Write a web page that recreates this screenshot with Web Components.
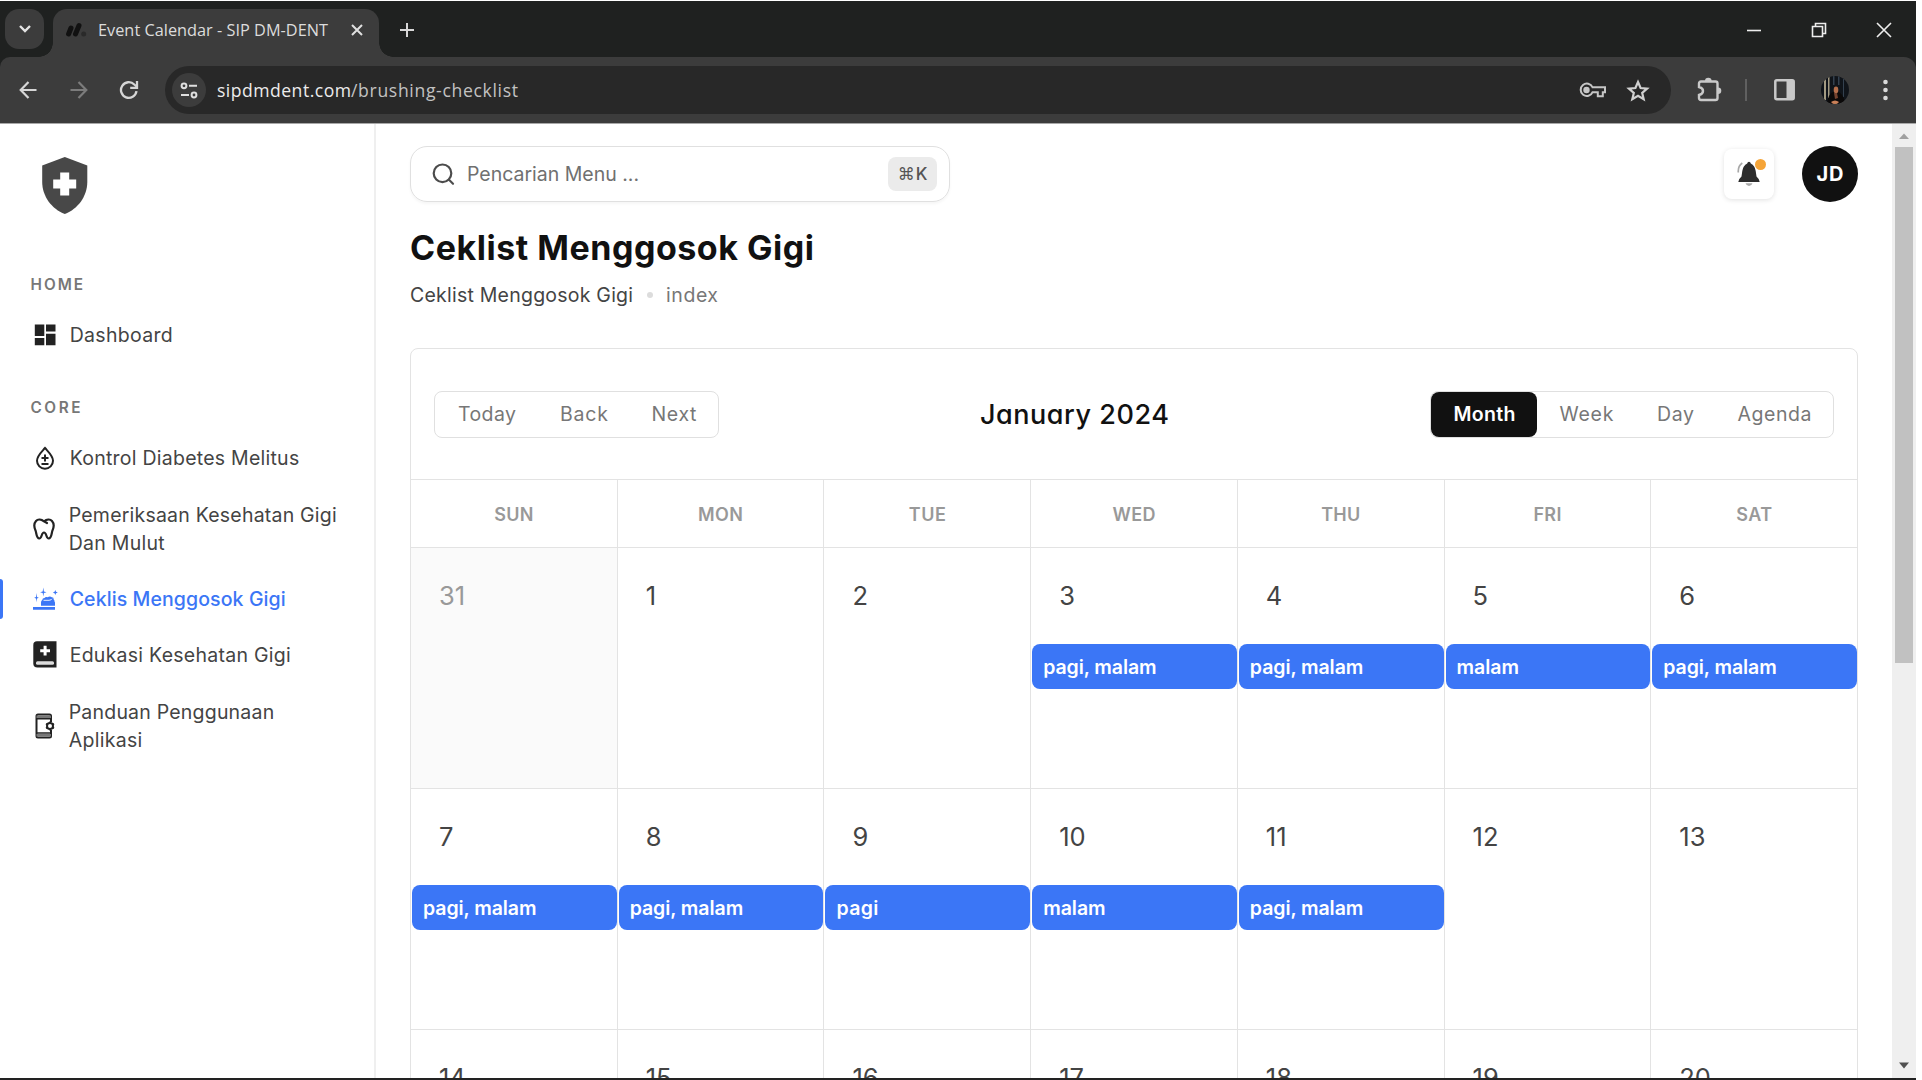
<!DOCTYPE html>
<html lang="id">
<head>
<meta charset="utf-8">
<title>Event Calendar - SIP DM-DENT</title>
<style>
html,body{margin:0;height:1080px;overflow:hidden;background:#fff;font-family:Inter,"Liberation Sans",sans-serif}
</style>
</head>
<body>
<app-window></app-window>
<script>
const make = (name, html, setup) => {
  const t = document.createElement('template');
  t.innerHTML = html;
  customElements.define(name, class extends HTMLElement {
    constructor() {
      super();
      this.attachShadow({mode: 'open'}).append(t.content.cloneNode(true));
    }
    connectedCallback() { if (setup) setup(this, this.shadowRoot); }
  });
};

make('tab-strip', `<style>
:host{display:flex;height:56px;background:#1f2120;color:#dcdcdc;align-items:flex-start}
.menu{width:39px;height:40px;margin:8px 0 0 5px;border-radius:14px;background:#3c3c3c;display:flex;align-items:center;justify-content:center}
.tab{position:relative;margin:8px 0 0 9px;width:326px;height:48px;border-radius:14px 14px 0 0;background:#3c3c3c;display:flex;align-items:center;box-sizing:border-box;padding:0 15px 6px 12px}
.tab::before,.tab::after{content:"";position:absolute;bottom:0;width:14px;height:14px}
.tab::before{left:-14px;background:radial-gradient(circle at 0 0,transparent 13.5px,#3c3c3c 14px)}
.tab::after{right:-14px;background:radial-gradient(circle at 100% 0,transparent 13.5px,#3c3c3c 14px)}
.fav{margin-right:11px}
fit-text{font:16.300px "Open Sans",sans-serif;line-height:24px}
.x{margin-left:auto}
.plus{margin:21px 0 0 20px}
.win{display:flex;align-items:center;margin:21px 24px 0 auto;gap:49px}
svg{display:block}
</style>
<div class="menu"><svg width="14" height="10" viewBox="0 0 14 10" fill="none" stroke="#e4e4e4" stroke-width="2.4"><path d="M2 2l5 5 5-5"/></svg></div>
<div class="tab"><svg class="fav" width="22" height="16" viewBox="0 0 22 16"><g stroke="#111" stroke-width="5" stroke-linecap="round"><path d="M3.6 12L6 6"/><path d="M10.5 12L14 3.5"/></g><circle cx="18.7" cy="12" r="2.5" fill="#2a2a2a"/></svg>
<fit-text w="230">Event Calendar - SIP DM-DENT</fit-text>
<svg class="x" width="14" height="14" viewBox="0 0 14 14" stroke="#e0e0e0" stroke-width="2"><path d="M2 2l10 10M12 2L2 12"/></svg></div>
<svg class="plus" width="16" height="16" viewBox="0 0 16 16" stroke="#d8d8d8" stroke-width="2"><path d="M8 1v14M1 8h14"/></svg>
<div class="win">
<svg width="16" height="16" viewBox="0 0 16 16" stroke="#eee" stroke-width="1.6"><path d="M1 8.5h14"/></svg>
<svg width="16" height="16" viewBox="0 0 16 16" fill="none" stroke="#eee" stroke-width="1.6"><path d="M1.500 4.500h10v10h-10zM4.500 4.500v-3h10v10h-3"/></svg>
<svg width="16" height="16" viewBox="0 0 16 16" stroke="#eee" stroke-width="1.6"><path d="M1 1l14 14M15 1L1 15"/></svg>
</div>`);

make('nav-bar', `<style>
:host{display:flex;align-items:center;height:67px;background:#3c3c3c;border-bottom:1px solid #a8a8a8;border-radius:10px 12px 0 0;box-sizing:border-box}
svg{display:block;flex:none}
.omni{display:flex;align-items:center;width:1506px;height:48px;border-radius:24px;background:#282828;margin-left:25px;box-sizing:border-box;padding:0 21px 0 7px}
.site{width:34px;height:34px;border-radius:50%;background:#3c3c3c;display:flex;align-items:center;justify-content:center;margin-right:11px}
fit-text{font:17.600px "Open Sans",sans-serif;line-height:24px;color:#ececec}
fit-text.p{color:#c2c2c2}
.sep{width:2px;height:22px;background:#606060;margin:0 27px 0 23px}
.me{width:28px;height:28px;border-radius:50%;margin:0 0 0 26px;overflow:hidden}
</style>
<svg style="margin-left:19px" width="18" height="18" viewBox="0 0 18 18" fill="none" stroke="#d6d6d6" stroke-width="2.2"><path d="M17.500 9H2M9.500 1L1.700 9l7.800 8"/></svg>
<svg style="margin-left:33px" width="18" height="18" viewBox="0 0 18 18" fill="none" stroke="#7c7c7c" stroke-width="2.2"><path d="M.5 9H16M8.500 1l7.800 8-7.800 8"/></svg>
<svg style="margin-left:31px;margin-right:1px" width="20" height="20" viewBox="0 0 20 20" fill="none" stroke="#d6d6d6" stroke-width="2.3"><path d="M17.500 11.200A7.800 7.800 0 1 1 15.300 4.500L17.500 6.500"/><path d="M18 1v6.800h-6.800"/></svg>
<div class="omni">
<div class="site"><svg width="18" height="17" viewBox="0 0 18 17" fill="none" stroke="#e0e0e0" stroke-width="2"><circle cx="4" cy="3.800" r="2.400"/><path d="M9 3.800h8M1 13h8"/><circle cx="14" cy="13" r="2.400"/></svg></div>
<fit-text w="134">sipdmdent.com</fit-text><fit-text class="p" w="167">/brushing-checklist</fit-text>
<svg style="margin-left:auto" width="27" height="16" viewBox="0 0 27 16" fill="none" stroke="#c6c6c6" stroke-width="2"><path d="M13.500 5.200H26v5h-2.200v4h-5v-4h-5.200A6.200 6.200 0 1 1 13.500 5.200z"/><circle cx="7.500" cy="8" r="2.200" fill="#c6c6c6"/></svg>
<svg style="margin-left:20px" width="24" height="23" viewBox="0 0 24 23" fill="none" stroke="#d0d0d0" stroke-width="2.200"><path d="M12 3l2.600 6 6.500.6-4.900 4.300 1.500 6.400L12 16.900l-5.700 3.400 1.500-6.400L2.900 9.600 9.400 9z"/></svg>
</div>
<svg style="margin-left:25px;margin-top:-2px" width="26" height="25" viewBox="0 0 26 25"><path d="M3 6.500Q3 4.500 5 4.500H19.500Q21.500 4.500 21.500 6.500V21Q21.500 23 19.500 23H5Q3 23 3 21V18Q7 17 7 14Q7 11 3 10Z" fill="none" stroke="#c9c9c9" stroke-width="2.400"/><path d="M9 4a3.300 3.300 0 0 1 6.600 0zM22 10.500a3.300 3.300 0 0 1 0 6.600z" fill="#c9c9c9"/></svg>
<div class="sep"></div>
<svg width="21" height="22" viewBox="0 0 21 22"><rect x="1.300" y="1.300" width="18.400" height="19" rx="1.500" fill="none" stroke="#c9c9c9" stroke-width="2.500"/><path d="M12.500 1H20v20h-7.500z" fill="#c9c9c9"/></svg>
<svg class="me" viewBox="0 0 28 28"><rect width="28" height="28" fill="#10141a"/><path d="M3 3h2v21H3zM7 0h1.500v22H7z" fill="#a39a82"/><path d="M12 0h1.500v9H12zM17 0h1.500v9H17zM22 3h1v18h-1z" fill="#34414f"/><path d="M6 28q1-10 6-12h6q5 3 6 12z" fill="#0b0909"/><ellipse cx="15" cy="14" rx="2.300" ry="3.400" fill="#b56f4c"/><path d="M13 17l3 0 1 5-3 1z" fill="#754330"/><path d="M10 26q4-3 8 0l-2 2h-4z" fill="#c98058"/></svg>
<svg style="margin-left:34px" width="5" height="22" viewBox="0 0 5 22" fill="#dadada"><circle cx="2.500" cy="3" r="2.300"/><circle cx="2.500" cy="11" r="2.300"/><circle cx="2.500" cy="19" r="2.300"/></svg>`);

make('menu-title', `<style>
:host{display:flex;align-items:center;height:20px;padding-left:30.500px;font-size:15.300px;font-weight:600;color:#777}
</style><slot></slot>`);

make('menu-item', `<style>
:host{display:flex;align-items:center;height:56px;color:#444;font-size:19.500px;line-height:28px;position:relative}
:host([tall]){height:85px}
:host([active]){color:#3b76f6;font-weight:500}
:host([active])::before{content:"";position:absolute;left:0;top:8px;width:3px;height:40px;border-radius:0 4px 4px 0;background:#3b76f6}
.i{width:28px;margin-left:31px;margin-right:10.700px;display:flex;justify-content:center}
.t{display:flex;flex-direction:column;align-items:flex-start}
:host([tall]) .t{margin-left:-1px}
:host([tall]){padding-top:1px;box-sizing:border-box}
</style><div class="i"><slot name="icon"></slot></div><div class="t"><slot></slot></div>`);

make('side-bar', `<style>
:host{display:flex;flex-direction:column;width:374px;border-right:2px solid #efefef;flex:none}
.logo{margin:33px 0 60px 42px;display:block}
svg{display:block}
.home{margin-top:0}.core{margin:35px 0 12px}
menu-item:nth-of-type(1){margin-top:12.500px}
</style>
<svg class="logo" width="46" height="57" viewBox="0 0 46 57"><path d="M22.800 0L45.300 8.500V25C45.300 39 36 52 22.800 57C9.500 52 .2 39 .2 25V8.500z" fill="#484848"/><path d="M18.200 15.500h9v7h7v9h-7v7h-9v-7h-7v-9h7z" fill="#fff"/></svg>
<menu-title class="home"><fit-text w="52.500">HOME</fit-text></menu-title>
<menu-item><svg slot="icon" width="22" height="22" viewBox="0 0 22 22" fill="#222"><path d="M.8.500h9.500v11.500H.800zM12 .500h9.500v7H12zM.800 14h9.500v7.200H.800zM12 9.700h9.500v11.500H12z"/></svg><fit-text w="103">Dashboard</fit-text></menu-item>
<menu-title class="core"><fit-text w="50">CORE</fit-text></menu-title>
<menu-item style="margin-top:0"><svg slot="icon" width="20" height="24" viewBox="0 0 20 24" fill="none" stroke="#222" stroke-width="2"><path d="M10 2C7 5.500 2 9.700 2 14.700a8 8 0 0 0 16 0C18 9.700 13 5.500 10 2z"/><path d="M10 8.500v7M6.500 12h7M6.500 18h7"/></svg><fit-text w="229.500">Kontrol Diabetes Melitus</fit-text></menu-item>
<menu-item tall><svg slot="icon" style="margin-right:2px" width="22" height="22" viewBox="0 0 22 22" fill="none" stroke="#222" stroke-width="2.200" stroke-linejoin="round" stroke-linecap="round"><path d="M11 3.300C8.500 1.500 5 .8 3 3C.6 5.700 1.300 10 2.700 13C3.500 15.500 3.500 20.500 6.300 20.500C9 20.500 8.300 14.500 11 14.500S13 20.500 15.700 20.500C18.500 20.500 18.500 15.500 19.300 13C20.700 10 21.400 5.700 19 3C17 .8 13.500 1.500 11 3.300L14 5"/></svg><fit-text w="268">Pemeriksaan Kesehatan Gigi</fit-text><fit-text w="96">Dan Mulut</fit-text></menu-item>
<menu-item active><svg slot="icon" width="26" height="24" viewBox="0 0 26 24" fill="#3b76f6"><path d="M1 20h22v2.800H1zM9 15.500Q9 13.800 10.300 13Q10.300 11 12.500 11Q13.500 9.600 15.500 10.200Q18 9 19.800 10.200Q22 10.200 21.700 12.500Q22.800 13.500 22.500 14.500L23 15.500V18.800H9z"/><path d="M11.500 13.300h5.500q2.500-.2 3-1.500" stroke="#fff" stroke-width=".9" fill="none"/><path d="M11.300 .5l.6 4 2.600.7-2.600.7-.6 3.600-.6-3.600L8.100 5.200l2.600-.7zM4.500 6l.5 4 1.800.7-1.800.7-.5 3.800-.5-3.800-1.800-.7 1.800-.7zM23.300 3l.7 1.800 1.800.7-1.800.7-.7 1.800-.7-1.800-1.800-.7 1.800-.7z"/></svg><fit-text w="216">Ceklis Menggosok Gigi</fit-text></menu-item>
<menu-item><svg slot="icon" width="24" height="27" viewBox="0 0 24 27"><path d="M4 .3H23.500V26.500H4.500Q.3 26.500.3 22.500V4Q.3.300 4 .3z" fill="#222"/><path d="M10.600 4.800h3v3.400H17v3h-3.400v3.400h-3v-3.400H7.200v-3h3.400z" fill="#fff"/><rect x="3" y="20.300" width="18" height="3.400" rx="1.500" fill="#ddd"/></svg><fit-text w="221">Edukasi Kesehatan Gigi</fit-text></menu-item>
<menu-item tall><svg slot="icon" width="20" height="26" viewBox="0 0 20 26" fill="none" stroke="#222" stroke-width="2"><path d="M16 9V3Q16 1.500 14.500 1.500H3Q1.500 1.500 1.500 3V23Q1.500 24.500 3 24.500H14.500Q16 24.500 16 23V17"/><path d="M1.500 3.800H16M1.500 22.300H16" stroke="#777" stroke-width="2.500"/><path d="M1.500 5.700H16M1.500 20H16" stroke-width="1.500"/><circle cx="15" cy="13" r="3"/><path d="M15 8.500v1.500M15 16v1.500M11 10.700l1.300.8M17.700 14.500l1.300.8M19 10.700l-1.300.8M12.300 14.500l-1.300.8" stroke-width="1.600"/></svg><fit-text w="205.500">Panduan Penggunaan</fit-text><fit-text w="73.500">Aplikasi</fit-text></menu-item>`);

make('top-bar', `<style>
:host{display:flex;align-items:center;height:56px}
.s{display:flex;align-items:center;width:540px;height:56px;box-sizing:border-box;border:1px solid #e0e0e0;border-radius:17px;box-shadow:0 2px 3px rgba(0,0,0,.04);padding:0 12px 0 21px;color:#707070;font-size:19.500px}
.s svg{margin-right:12px}
.k{margin-left:auto;width:49px;height:34px;border-radius:8px;background:#ebebeb;display:flex;align-items:center;justify-content:center;font-size:17px;font-weight:500;color:#555}
.k span{font:17px "DejaVu Sans",sans-serif;margin-right:1px}
.b{position:relative;margin-left:auto;width:50px;height:50px;border-radius:8px;box-shadow:0 1px 5px rgba(0,0,0,.12);display:flex;align-items:center;justify-content:center}
.b i{position:absolute;left:31px;top:10px;width:11px;height:11px;border-radius:50%;background:#f5a437}
.a{width:56px;height:56px;border-radius:50%;background:#111;color:#fff;font-size:20px;font-weight:700;display:flex;align-items:center;justify-content:center;margin-left:28px}
</style>
<div class="s"><svg width="23" height="23" viewBox="0 0 23 23" fill="none" stroke="#4c4c4c" stroke-width="2.200" stroke-linecap="round"><circle cx="10.500" cy="10.300" r="8.800"/><path d="M17 16.800l4 4"/></svg><fit-text w="172">Pencarian Menu ...</fit-text><div class="k"><span>⌘</span>K</div></div>
<div class="b"><svg width="24" height="28" viewBox="0 0 24 28"><path d="M12 1.700q1.500 0 1.800 1.800Q18 5.500 18.700 11l.8 5.500q3 2.500 3.200 5.500H1.300q.2-3 3.200-5.500L5.300 11Q6 5.500 10.200 3.500 10.500 1.700 12 1.700z" fill="#2c2c2c"/><path d="M8.500 23.300h7q-1 2.700-3.500 2.700t-3.500-2.700z" fill="#a8a8a8"/><path d="M1.300 12.500q-.5-6.500 4-9.500" fill="none" stroke="#a8a8a8" stroke-width="1.700"/></svg><i></i></div>
<div class="a"><fit-text w="27">JD</fit-text></div>`);

make('button-group', `<style>
:host{display:flex;align-items:stretch;height:47px;box-sizing:border-box;border:1px solid #e0e0e0;border-radius:8px;color:#777;font-size:19.500px}
</style><slot></slot>`);

make('group-button', `<style>
:host{display:flex;align-items:center;justify-content:center;box-sizing:border-box;padding-left:1px}
:host([on]){background:#111;color:#fff;font-weight:600;border-radius:8px}
</style><slot></slot>`);

make('day-cell', `<style>
:host{display:block;box-sizing:border-box;border-top:1px solid #e3e3e3;border-right:1px solid #e3e3e3;color:#444;min-width:0}
:host(:nth-child(7n)){border-right-color:transparent}
:host([off]){background:#fafafa;color:#999}
.n{font-size:25.500px;line-height:32px;padding:32px 0 0 28px;height:32px}
</style><div class="n"></div><slot></slot>`, (el, r) => { r.querySelector('.n').textContent = el.getAttribute('n'); });

make('event-chip', `<style>
:host{display:flex;align-items:center;height:45px;margin:32px 0 0 1px;padding-left:11px;border-radius:8px;background:#3b76f6;color:#fff;font-size:19.500px;font-weight:600}
</style><slot></slot>`);

const W = {'pagi, malam': 113.5, 'malam': 62.5, 'pagi': 42};
make('month-grid', `<style>
:host{display:block;margin-right:-1px}
.g{display:grid;grid-template-columns:repeat(7,1fr)}
.h{height:68px;box-sizing:border-box;border-top:1px solid #e3e3e3;border-right:1px solid #e3e3e3;display:flex;align-items:center;justify-content:center;font-size:18px;font-weight:600;color:#999;padding-top:2px}
.h:last-child{border-right-color:transparent}
.d{grid-auto-rows:241px}
</style><div class="g w"></div><div class="g d"></div>`, (el, r) => {
  r.querySelector('.w').innerHTML = [['SUN',39],['MON',45],['TUE',37],['WED',43],['THU',39],['FRI',28],['SAT',36]]
    .map(([d, w]) => `<div class="h"><fit-text w="${w}">${d}</fit-text></div>`).join('');
  const ev = {3:'pagi, malam',4:'pagi, malam',5:'malam',6:'pagi, malam',7:'pagi, malam',8:'pagi, malam',9:'pagi',10:'malam',11:'pagi, malam'};
  let s = '<day-cell off n="31"></day-cell>';
  for (let d = 1; d <= 20; d++)
    s += `<day-cell n="${d}">${ev[d] ? `<event-chip><fit-text w="${W[ev[d]]}">${ev[d]}</fit-text></event-chip>` : ''}</day-cell>`;
  r.querySelector('.d').innerHTML = s;
});

make('event-calendar', `<style>
:host{display:block;width:1448px;box-sizing:border-box;border:1px solid #e3e3e3;border-radius:8px;height:900px}
.t{display:flex;align-items:center;justify-content:space-between;height:130px;padding:0 23px 0 23px}
h2{margin:0;font-size:27px;font-weight:500;color:#111;font-feature-settings:"cv11"}
</style>
<div class="t">
<button-group style="width:285px"><group-button style="width:103px"><fit-text w="58">Today</fit-text></group-button><group-button style="width:91px"><fit-text w="48">Back</fit-text></group-button><group-button style="width:89px"><fit-text w="45">Next</fit-text></group-button></button-group>
<h2><fit-text w="189">January 2024</fit-text></h2>
<button-group style="width:404px"><group-button on style="width:106px"><fit-text w="62">Month</fit-text></group-button><group-button style="width:98px"><fit-text w="54">Week</fit-text></group-button><group-button style="width:80px"><fit-text w="37">Day</fit-text></group-button><group-button style="width:118px"><fit-text w="74">Agenda</fit-text></group-button></button-group>
</div>
<month-grid></month-grid>`);

make('scroll-bar', `<style>
:host{display:flex;flex-direction:column;align-items:center;justify-content:space-between;width:24px;background:#efefef;flex:none}
.c{flex:1;width:18px;margin-top:7px}
.c div{height:516px;background:#c1c1c1}
svg{display:block}
</style><svg style="margin-top:9px" width="10" height="7" viewBox="0 0 10 7"><path d="M5 0.500l5 5.500H0z" fill="#a0a0a0"/></svg><div class="c"><div></div></div><svg style="margin-bottom:9px" width="10" height="7" viewBox="0 0 10 7"><path d="M0 .5h10L5 6.500z" fill="#505050"/></svg>`);

make('main-view', `<style>
:host{display:block;flex:1;min-width:0;padding:22px 57.500px 0 34px;overflow:hidden;box-sizing:border-box}
h1{margin:26px 0 0;font-size:34px;line-height:40px;font-weight:700;color:#111;font-feature-settings:"cv11"}
.b{display:flex;align-items:center;height:28px;margin:13px 0 39px;font-size:19.500px;color:#444}
.b i{width:6px;height:6px;border-radius:50%;background:#dcdcdc;margin:0 13px 0 14px}
.b .l{color:#777}
</style>
<top-bar style="width:1448px"></top-bar>
<h1><fit-text w="404">Ceklist Menggosok Gigi</fit-text></h1>
<div class="b"><fit-text w="223">Ceklist Menggosok Gigi</fit-text><i></i><fit-text class="l" w="52">index</fit-text></div>
<event-calendar></event-calendar>`);

make('app-window', `<style>
:host{display:flex;flex-direction:column;width:1916px;height:1080px;box-sizing:border-box;border-top:1px solid #fff;border-bottom:2px solid #222;overflow:hidden;background:#fff}
.top{background:#1f2120;flex:none}
.page{display:flex;flex:1;min-height:0;overflow:hidden}
</style>
<div class="top"><tab-strip></tab-strip><nav-bar></nav-bar></div>
<div class="page"><side-bar></side-bar><main-view></main-view><scroll-bar></scroll-bar></div>`);

/* Spreads its letters so that the run takes exactly the given width. */
make('fit-text', `<style>:host{display:inline-block;white-space:pre;flex:none}</style><slot></slot>`, el => {
  const w = +el.getAttribute('w'), n = el.textContent.length;
  const ls = (w - el.getBoundingClientRect().width) / (n - 1);
  el.style.letterSpacing = ls + 'px';
  el.style.marginRight = -ls + 'px';
});
</script>
</body>
</html>
